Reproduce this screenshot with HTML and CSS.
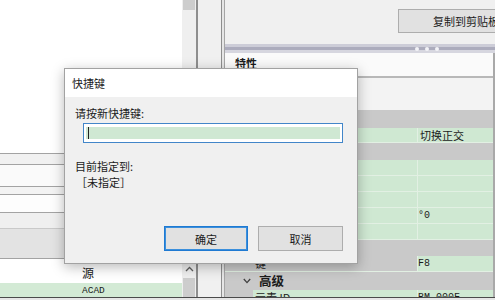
FILE: index.html
```html
<!DOCTYPE html>
<html lang="zh-CN">
<head>
<meta charset="utf-8">
<title>快捷键</title>
<link rel="stylesheet" href="styles.css">
</head>
<body>
<div class="app">
  <div class="list-col">
    <div class="pane-blank"></div>
    <div class="rule"></div>
    <div class="band band-a"></div>
    <div class="rule"></div>
    <div class="band band-b"></div>
    <div class="rule"></div>
    <div class="band band-c"></div>
    <div class="rule"></div>
    <div class="band band-d"></div>
    <div class="rule"></div>
    <div class="band band-e"></div>
    <div class="rule rule-soft"></div>
    <div class="band band-f"></div>
    <div class="rule"></div>
    <div class="src-head">源</div>
    <div class="src-row">ACAD</div>
  </div>
  <div class="vscroll">
    <div class="thumb thumb-top"></div>
    <div class="track-fill"></div>
    <div class="arrow-up">
      <svg width="9" height="6" viewBox="0 0 9 6"><polyline points="1,5 4.5,1.5 8,5" fill="none" stroke="#606060" stroke-width="1.3"/></svg>
    </div>
    <div class="thumb thumb-bottom"></div>
  </div>
  <div class="divider"></div>
  <div class="strip"></div>
  <div class="divider thin"></div>
  <div class="gutter"></div>
  <div class="divider thin soft"></div>
  <div class="props">
    <div class="toolbar"><button class="btn copy">复制到剪贴板</button></div>
    <div class="splitter"><i></i><i></i><i></i></div>
    <div class="grid">
      <div class="props-head">特性</div>
      <div class="props-rule"></div>
      <div class="props-tools"></div>
      <div class="cat tall"></div>
      <div class="prop short"><div class="gut"></div><div class="name"></div><div class="val">切换正交</div></div>
      <div class="cat"></div>
      <div class="prop"><div class="gut"></div><div class="name"></div><div class="val"></div></div>
      <div class="prop"><div class="gut"></div><div class="name"></div><div class="val"></div></div>
      <div class="prop"><div class="gut"></div><div class="name"></div><div class="val"></div></div>
      <div class="prop"><div class="gut"></div><div class="name"></div><div class="val mono">°0</div></div>
      <div class="prop"><div class="gut"></div><div class="name"></div><div class="val"></div></div>
      <div class="cat low"></div>
      <div class="prop grey-name"><div class="gut"></div><div class="name">键</div><div class="val mono">F8</div></div>
      <div class="cat tall adv">
        <svg class="chev" width="8" height="6" viewBox="0 0 8 6"><polyline points="0.8,1 4,4.6 7.2,1" fill="none" stroke="#404040" stroke-width="1.3"/></svg>
        <b>高级</b>
      </div>
      <div class="prop"><div class="gut"></div><div class="name">元素 ID</div><div class="val mono">BM_000F</div></div>
    </div>
  </div>
</div>

<div class="dialog" role="dialog" aria-label="快捷键">
  <div class="dlg-title">快捷键</div>
  <div class="dlg-body">
    <div class="dlg-label">请按新快捷键:</div>
    <div class="field"><div class="field-fill"><span class="caret"></span></div></div>
    <div class="dlg-label spaced">目前指定到:</div>
    <div class="dlg-value">［未指定］</div>
    <div class="dlg-actions">
      <button class="btn primary">确定</button>
      <button class="btn cancel">取消</button>
    </div>
  </div>
</div>
</body>
</html>
```

FILE: styles.css
```css
* { box-sizing: border-box; margin: 0; padding: 0; }

html, body { width: 495px; height: 300px; overflow: hidden; }

body {
  position: relative;
  background: #e6e6e6;
  font-family: "Noto Sans CJK SC", "Noto Sans", sans-serif;
  font-size: 11px;
  color: #1b1b1b;
}

.app {
  display: flex;
  height: 298px;
  border-bottom: 1px solid #4a4a4a;
  overflow: hidden;
}

/* left list */
.list-col { width: 182px; flex: none; display: flex; flex-direction: column; background: #fff; }
.pane-blank { height: 153px; background: #fff; }
.rule { height: 1px; background: #a3a3a3; }
.rule-soft { background: #c9c9c9; }
.band-a { height: 10px; background: #f1f1f1; }
.band-b { height: 21px; background: #fafafa; }
.band-c { height: 7px; background: #f3f3f3; }
.band-d { height: 17px; background: #fdfdfd; }
.band-e { height: 15px; background: #efefef; }
.band-f { height: 29px; background: #e3e3e3; }
.src-head { height: 24px; padding: 5px 0 0 82px; line-height: 18px; font-size: 12px; background: #fff; }
.src-row {
  height: 14px; padding-left: 82px; background: #d3ead5;
  font-family: "Liberation Mono", monospace; font-size: 9.5px; line-height: 16px; overflow: hidden;
}

/* scrollbar */
.vscroll { width: 14px; flex: none; display: flex; flex-direction: column; padding: 0 1px; background: #efefef; }
.thumb { background: #cdcdcd; }
.thumb-top { height: 10px; }
.track-fill { flex: 1; }
.arrow-up { height: 16px; display: flex; justify-content: center; align-items: center; }
.thumb-bottom { height: 19px; margin-top: 1px; }

.divider { width: 2px; flex: none; background: #8e8e8e; }
.divider.thin { width: 1px; }
.divider.soft { background: #a5a5a5; }
.strip { width: 23px; flex: none; background: #f0f0f0; }
.gutter { width: 2px; flex: none; background: #e6e6e6; }

/* right property panel */
.props { flex: 1; min-width: 0; display: flex; flex-direction: column; overflow: hidden; background: #f0f0f0; }
.toolbar { height: 44px; flex: none; display: flex; align-items: flex-start; padding: 9px 0 0 173px; overflow: hidden; }

.btn {
  font-family: inherit; font-size: 11px; color: #1b1b1b;
  background: #e1e1e1; border: 1px solid #adadad;
  height: 25px; flex: none;
}
.btn.copy { width: 136px; height: 24px; }

.splitter {
  height: 9px; flex: none;
  display: flex; align-items: center; gap: 6px; padding-left: 190px;
  background: linear-gradient(#cdcdd8 0 3px, #acacbd 3px 6px, #d6d6df 6px);
}
.splitter i { width: 4px; height: 4px; border-radius: 50%; background: #f3f3f7; }

.grid { flex: 1; min-height: 0; display: flex; flex-direction: column; border-right: 2px solid #a9a9a9; background: #c9c9c9; }
.grid > * { flex: none; }

.props-head { height: 23px; padding-left: 10px; background: #fafafa; font-weight: 700; line-height: 21px; }
.props-rule { height: 2px; background: #b8b8b8; }
.props-tools { height: 32px; background: #f3f3f3; }

.cat { height: 17px; background: #c9c9c9; display: flex; align-items: center; }
.cat.tall { height: 18px; }
.cat.low { height: 16px; }
.cat.adv .chev { margin-left: 18px; }
.cat.adv b { margin-left: 8px; font-size: 12.5px; font-weight: 700; line-height: 18px; }

.prop { height: 16px; display: flex; background: #cfe8d2; border-bottom: 1px solid #e2f0e3; }
.prop.short { height: 15px; }
.gut { width: 28px; flex: none; background: #c9c9c9; }
.name { width: 164px; flex: none; padding-left: 2px; line-height: 15px; white-space: nowrap; overflow: hidden; }
.val { flex: 1; min-width: 0; border-left: 1px solid #e2f0e3; padding-left: 2px; line-height: 15px; white-space: nowrap; overflow: hidden; }
.val.mono { font-family: "Liberation Mono", monospace; font-size: 10px; padding-left: 0; }
.prop.grey-name { background: #c9c9c9; }
.prop.grey-name .val { background: #cfe8d2; }

/* dialog */
.dialog {
  position: absolute; left: 64px; top: 68px;
  width: 294px; height: 196px;
  display: flex; flex-direction: column;
  border: 1px solid #a2a2a2;
  background: #f0f0f0;
  box-shadow: 0 3px 12px rgba(0, 0, 0, 0.28);
}
.dlg-title { height: 28px; flex: none; padding-left: 7px; line-height: 28px; background: #fff; color: #222; }
.dlg-body { flex: 1; display: flex; flex-direction: column; padding: 8px 14px 12px 10px; }
.dlg-label { line-height: 16px; }
.dlg-label.spaced { margin-top: 15px; }
.dlg-value { line-height: 16px; padding-left: 1px; }

.field { margin: 2px 0 0 8px; height: 20px; padding: 3px 2px; border: 1px solid #4286c9; background: #fff; }
.field-fill { height: 12px; background: #cfe8d3; padding-left: 2px; display: flex; align-items: center; }
.caret { width: 1px; height: 12px; background: #222; }

.dlg-actions { margin-top: auto; display: flex; justify-content: flex-end; gap: 10px; }
.btn.primary { width: 84px; border: 1px solid #1f7ad2; box-shadow: inset 0 0 0 1px #3b8fdc; }
.btn.cancel { width: 85px; }
```
